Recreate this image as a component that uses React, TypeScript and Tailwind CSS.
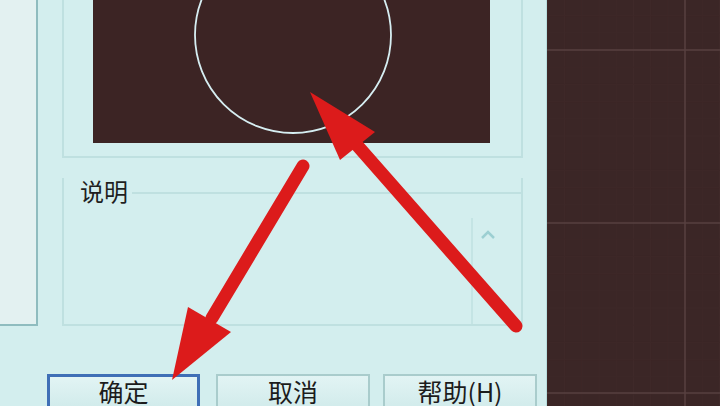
import React from "react";

const minor = Array.from({ length: 12 }, (_, i) => i);

function CadGrid() {
  return (
    <svg className="h-full w-full" viewBox="0 0 173 406" preserveAspectRatio="none">
      {minor.map((i) => (
        <line key={"v" + i} x1={i * 17.2 + 0.5} y1="0" x2={i * 17.2 + 0.5} y2="406" stroke="#3f2929" strokeWidth="1" />
      ))}
      {Array.from({ length: 25 }, (_, i) => (
        <line key={"h" + i} x1="0" y1={50 + (i - 3) * 17.2} x2="173" y2={50 + (i - 3) * 17.2} stroke="#3e2828" strokeWidth="1" />
      ))}
      <line x1="0" y1="50" x2="173" y2="50" stroke="#574040" strokeWidth="1.5" />
      <line x1="0" y1="223" x2="173" y2="223" stroke="#574040" strokeWidth="1.5" />
      <line x1="0" y1="393" x2="173" y2="393" stroke="#574040" strokeWidth="1.5" />
      <line x1="138" y1="0" x2="138" y2="406" stroke="#574040" strokeWidth="1.5" />
    </svg>
  );
}

function Arrows() {
  return (
    <svg className="pointer-events-none absolute inset-0 h-full w-full" viewBox="0 0 720 406">
      <line x1="303" y1="166" x2="212" y2="318" stroke="#dc1b1b" strokeWidth="13" strokeLinecap="round" />
      <polygon points="172,380 188,307 231,332" fill="#dc1b1b" />
      <line x1="356" y1="144" x2="516" y2="326" stroke="#dc1b1b" strokeWidth="13" strokeLinecap="round" />
      <polygon points="310,92 375,132 340,160" fill="#dc1b1b" />
    </svg>
  );
}

function DlgButton({ label, active, w }: { label: string; active?: boolean; w: string }) {
  return (
    <button
      type="button"
      className={
        "h-[40px] shrink-0 bg-gradient-to-b from-[#e2f4f4] to-[#cfeaea] pb-[6px] text-[25px] leading-none text-[#1c1c1c] " +
        w +
        (active ? " border-[3px] border-[#3f6fb6]" : " border-2 border-[#a9cccc]")
      }
    >
      {label}
    </button>
  );
}

export default function App() {
  return (
    <div
      className="relative flex h-[406px] w-[720px] overflow-hidden"
      style={{ fontFamily: '"Noto Sans CJK SC", "Noto Sans", sans-serif' }}
    >
      <div className="flex h-full w-[547px] shrink-0 flex-col border-r border-[#b8dede] bg-[#d3eeee]">
        <div className="flex h-[374px] shrink-0">
          <div className="h-[326px] w-[38px] shrink-0 border-b-2 border-r-2 border-[#8fbcbf] bg-[#e3f1f1]" />
          <div className="ml-[24px] flex w-[461px] flex-col">
            <div className="h-[158px] border-b-2 border-l-2 border-r-2 border-[#bfe0e0] pl-[29px]">
              <div className="h-[143px] w-[397px] bg-[#3c2424]">
                <svg className="h-full w-full" viewBox="0 0 397 143">
                  <circle cx="200" cy="35" r="98" fill="none" stroke="#d6eef2" strokeWidth="1.8" />
                </svg>
              </div>
            </div>
            <div className="mt-[20px] flex h-[148px] flex-col border-b-2 border-l-2 border-r-2 border-[#bfe0e0]">
              <div className="flex h-[26px] items-center">
                <span className="ml-[16px] text-[24px] leading-none text-[#1f1f1f]">说明</span>
                <div className="ml-[4px] mt-[4px] flex-1 border-t-2 border-[#bfe0e0]" />
              </div>
              <div className="flex flex-1 justify-end">
                <div className="mt-[14px] flex w-[50px] justify-start border-l-2 border-[#c4e4e4] pl-[7px]">
                  <svg className="mt-[10px] h-[12px] w-[16px]" viewBox="0 0 16 12">
                    <polyline points="2,10 8,4 14,10" fill="none" stroke="#9ccfd2" strokeWidth="2.5" />
                  </svg>
                </div>
              </div>
            </div>
          </div>
        </div>
        <div className="flex pl-[47px]">
          <DlgButton label="确定" active w="w-[153px]" />
          <div className="w-[16px]" />
          <DlgButton label="取消" w="w-[154px]" />
          <div className="w-[13px]" />
          <DlgButton label="帮助(H)" w="w-[154px]" />
        </div>
      </div>
      <div className="h-full flex-1 bg-[#3b2626]">
        <CadGrid />
      </div>
      <Arrows />
    </div>
  );
}
